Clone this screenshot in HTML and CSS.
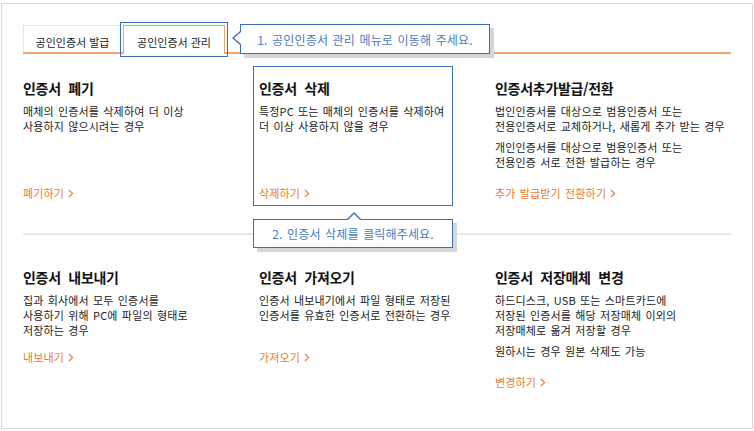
FILE: index.html
```html
<!DOCTYPE html>
<html lang="ko">
<head>
    <meta charset="UTF-8">
    <meta name="viewport" content="width=device-width, initial-scale=1.0">
    <title>공인인증서 관리</title>
    <link rel="stylesheet" href="styles.css">
</head>
<body>
    <div class="panel">
        <div class="tabs">
            <a class="tab">공인인증서 발급</a>
            <a class="tab on">공인인증서 관리<span class="mark"></span></a>
            <div class="callout callout-left">1. 공인인증서 관리 메뉴로 이동해 주세요.</div>
        </div>

        <div class="row row-top">
            <div class="card">
                <h3>인증서 폐기</h3>
                <div class="desc">
                    <p>매체의 인증서를 삭제하여 더 이상<br>사용하지 않으시려는 경우</p>
                </div>
                <a class="link">폐기하기<svg width="6" height="9" viewBox="0 0 6 9"><path d="M1 1 L4.6 4.5 L1 8" /></svg></a>
            </div>
            <div class="card picked">
                <h3>인증서 삭제</h3>
                <div class="desc">
                    <p>특정PC 또는 매체의 인증서를 삭제하여<br>더 이상 사용하지 않을 경우</p>
                </div>
                <a class="link">삭제하기<svg width="6" height="9" viewBox="0 0 6 9"><path d="M1 1 L4.6 4.5 L1 8" /></svg></a>
                <span class="mark"></span>
                <div class="callout callout-up">2. 인증서 삭제를 클릭해주세요.</div>
            </div>
            <div class="card">
                <h3>인증서추가발급/전환</h3>
                <div class="desc">
                    <p>법인인증서를 대상으로 범용인증서 또는<br>전용인증서로 교체하거나, 새롭게 추가 받는 경우</p>
                    <p>개인인증서를 대상으로 범용인증서 또는<br>전용인증 서로 전환 발급하는 경우</p>
                </div>
                <a class="link">추가 발급받기 전환하기<svg width="6" height="9" viewBox="0 0 6 9"><path d="M1 1 L4.6 4.5 L1 8" /></svg></a>
            </div>
        </div>

        <div class="divider"></div>

        <div class="row row-bottom">
            <div class="card">
                <h3>인증서 내보내기</h3>
                <div class="desc">
                    <p>집과 회사에서 모두 인증서를<br>사용하기 위해 PC에 파일의 형태로<br>저장하는 경우</p>
                </div>
                <a class="link">내보내기<svg width="6" height="9" viewBox="0 0 6 9"><path d="M1 1 L4.6 4.5 L1 8" /></svg></a>
            </div>
            <div class="card">
                <h3>인증서 가져오기</h3>
                <div class="desc">
                    <p>인증서 내보내기에서 파일 형태로 저장된<br>인증서를 유효한 인증서로 전환하는 경우</p>
                </div>
                <a class="link">가져오기<svg width="6" height="9" viewBox="0 0 6 9"><path d="M1 1 L4.6 4.5 L1 8" /></svg></a>
            </div>
            <div class="card">
                <h3>인증서 저장매체 변경</h3>
                <div class="desc two">
                    <p>하드디스크, USB 또는 스마트카드에<br>저장된 인증서를 해당 저장매체 이외의<br>저장매체로 옮겨 저장할 경우</p>
                    <p>원하시는 경우 원본 삭제도 가능</p>
                </div>
                <a class="link">변경하기<svg width="6" height="9" viewBox="0 0 6 9"><path d="M1 1 L4.6 4.5 L1 8" /></svg></a>
            </div>
        </div>
    </div>
</body>
</html>
```

FILE: styles.css
```css
* {
    box-sizing: border-box;
}

body {
    margin: 0;
    padding: 0;
    background-color: #fff;
    font-family: "Noto Sans CJK KR", "Noto Sans", sans-serif;
    color: #222;
}

.panel {
    width: 752px;
    height: 426px;
    margin: 3px 0 0 1px;
    padding: 21px 21px 0 21px;
    border: 1px solid #d9d9d9;
}

/* tabs */
.tabs {
    position: relative;
    display: flex;
    height: 29px;
    border-bottom: 2px solid #f2a46a;
}

.tab {
    display: block;
    height: 27px;
    padding-top: 8px;
    font-size: 11px;
    line-height: 16px;
    text-align: center;
    color: #222;
}

.tab:first-child {
    width: 98px;
    border-top: 1px solid #e6e6e6;
    border-left: 1px solid #e6e6e6;
}

.tab.on {
    position: relative;
    width: 102px;
    height: 29px;
    margin-left: 2px;
    border: 1px solid #f2a46a;
    border-bottom: none;
    background-color: #fff;
}

.mark {
    position: absolute;
    border: 1px solid #3e6fb6;
}

.tab .mark {
    left: -4px;
    top: -4px;
    width: 108px;
    height: 35px;
}

/* callouts */
.callout {
    position: absolute;
    background-color: #fff;
    border: 1px solid #3e6fb6;
    box-shadow: 4px 4px 0 #d6d6d6;
    color: #4a7bc2;
    font-size: 12px;
    letter-spacing: 0.15px;
    word-spacing: 1px;
    text-align: center;
    white-space: nowrap;
    z-index: 2;
}

.callout::before,
.callout::after {
    content: "";
    position: absolute;
    width: 0;
    height: 0;
}

.callout-left {
    left: 217px;
    top: -1px;
    width: 250px;
    height: 30px;
    padding-top: 2px;
    line-height: 25px;
}

.callout-left::before {
    left: -9px;
    top: 6px;
    border-top: 7px solid transparent;
    border-bottom: 7px solid transparent;
    border-right: 8px solid #3e6fb6;
}

.callout-left::after {
    left: -7px;
    top: 7px;
    border-top: 6px solid transparent;
    border-bottom: 6px solid transparent;
    border-right: 7px solid #fff;
}

.callout-up {
    left: -6px;
    top: 153px;
    width: 200px;
    height: 29px;
    line-height: 27px;
}

.callout-up::before {
    left: 93px;
    top: -8px;
    border-left: 7px solid transparent;
    border-right: 7px solid transparent;
    border-bottom: 7px solid #3e6fb6;
}

.callout-up::after {
    left: 94px;
    top: -6px;
    border-left: 6px solid transparent;
    border-right: 6px solid transparent;
    border-bottom: 6px solid #fff;
}

/* cards */
.row {
    display: grid;
    grid-template-columns: repeat(3, 236px);
}

.row-top {
    margin-top: 12px;
}

.row-bottom {
    margin-top: 20px;
}

.card {
    position: relative;
    display: flex;
    flex-direction: column;
    align-items: flex-start;
    padding: 13px 0 5px;
}

.card h3 {
    margin: 0 0 7px;
    font-size: 14px;
    line-height: 18px;
    font-weight: bold;
    letter-spacing: -0.3px;
    word-spacing: 4px;
    color: #111;
}

.desc {
    min-height: 45px;
}

.row-top .desc {
    min-height: 70px;
}

.desc.two {
    padding-bottom: 4px;
}

.desc p {
    margin: 0;
    font-size: 11px;
    line-height: 15px;
    letter-spacing: 0.15px;
    word-spacing: 1px;
    white-space: nowrap;
    color: #222;
}

.desc p + p {
    margin-top: 6px;
}

.link {
    display: flex;
    align-items: center;
    margin-top: 11px;
    font-size: 11px;
    line-height: 16px;
    letter-spacing: 0.15px;
    word-spacing: 1px;
    color: #eb7a2e;
}

.link svg {
    margin-left: 4px;
}

.link path {
    fill: none;
    stroke: #eb7a2e;
    stroke-width: 1.1;
}

.picked .mark {
    left: -6px;
    top: 0;
    width: 200px;
    height: 140px;
}

.divider {
    height: 2px;
    margin-top: 27px;
    background-color: #e8e8e8;
}
```
